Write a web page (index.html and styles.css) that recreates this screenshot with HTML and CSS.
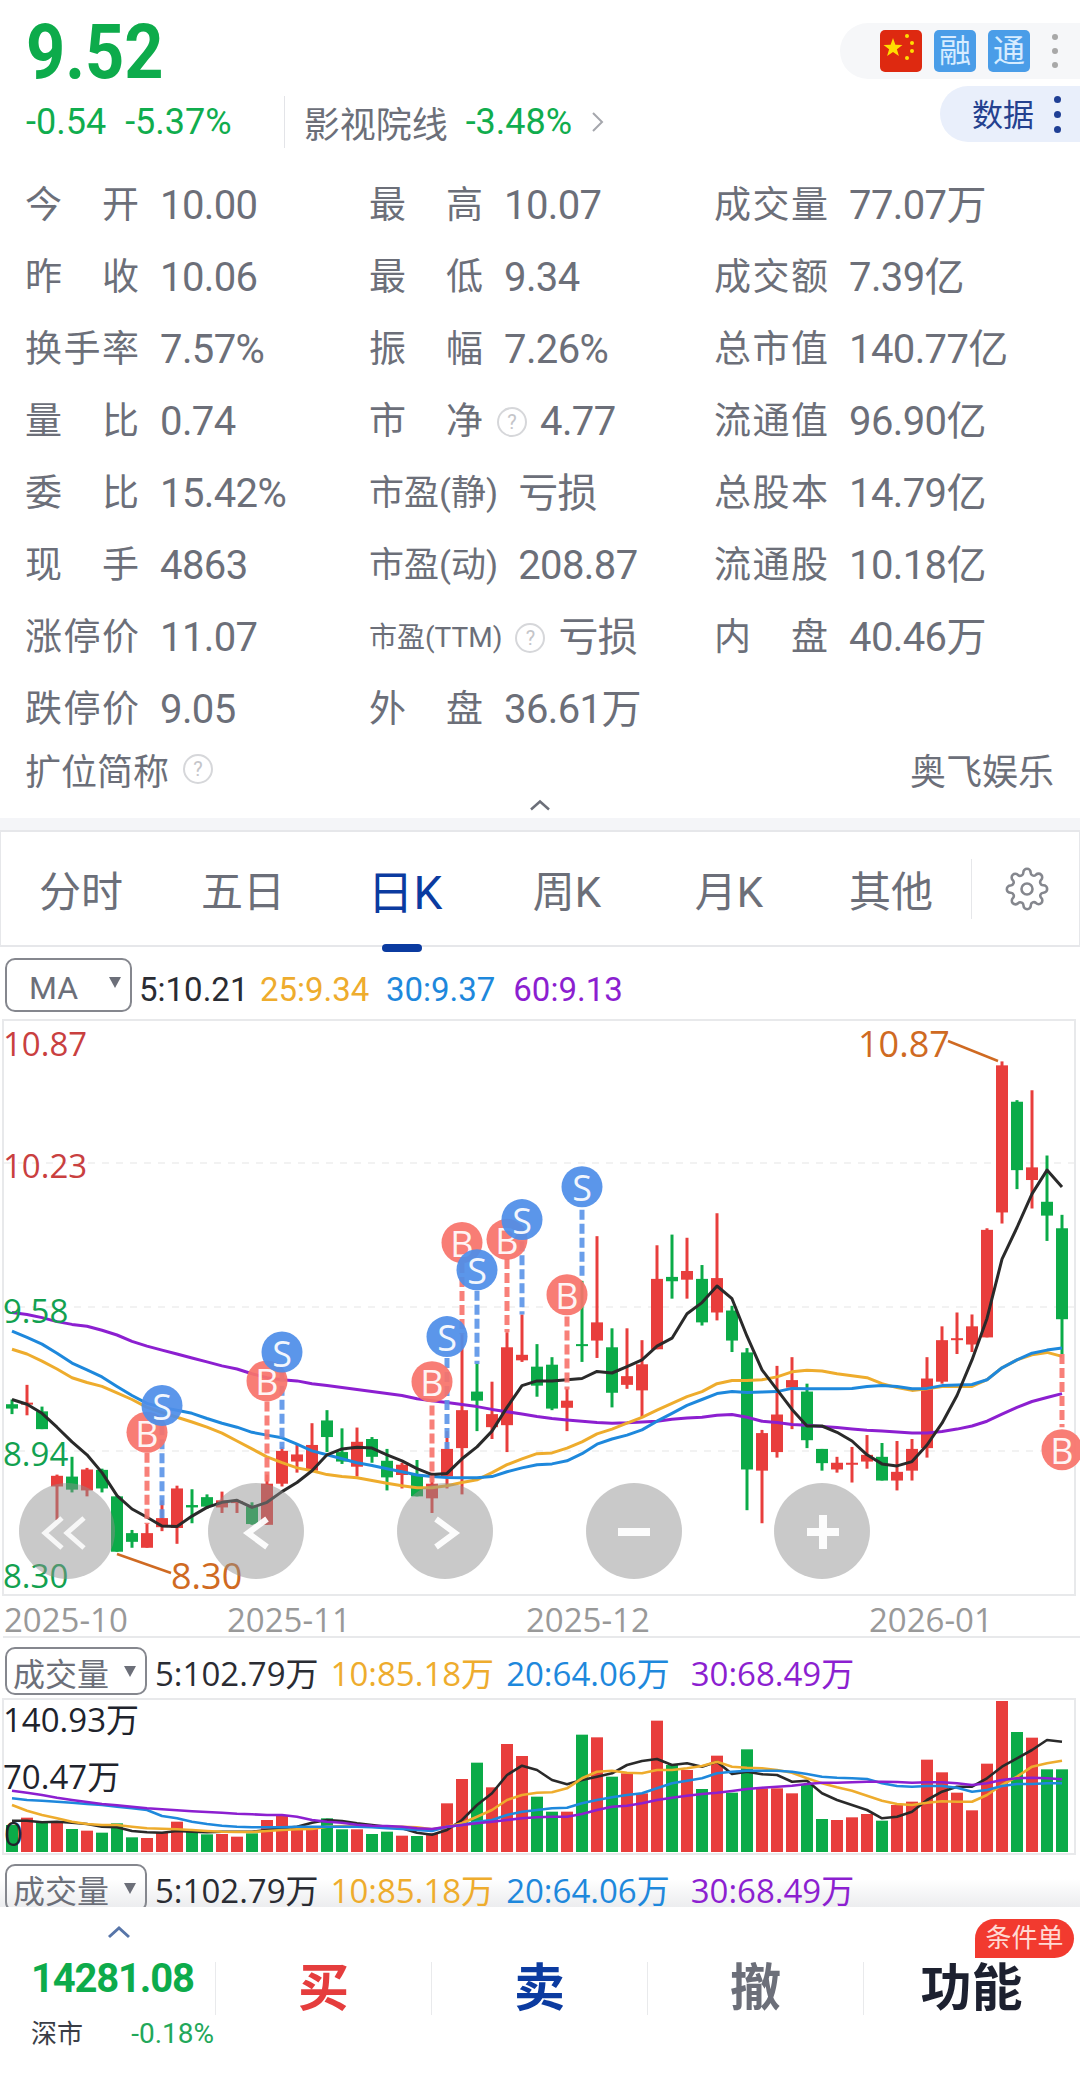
FILE: index.html
```html
<!DOCTYPE html>
<html lang="zh-CN">
<head>
    <meta charset="UTF-8" />
    <title>9.52 行情</title>
    <meta name="viewport" content="width=device-width, initial-scale=1" />
    <link rel="stylesheet" href="styles.css">
</head>
<body>
    <header class="quote-head">
        <div class="head-left">
            <div class="last-price">9.52</div>
            <div class="change-row">
                <span class="change">-0.54</span>
                <span class="change change-last">-5.37%</span>
                <span class="head-divider"></span>
                <span class="sector">影视院线</span>
                <span class="change">-3.48%</span>
                <svg class="sector-arrow" viewBox="0 0 14 24"><path d="M2 3l9 9-9 9" /></svg>
            </div>
        </div>
        <div class="head-right">
            <div class="badge-pill">
                <svg class="flag" viewBox="0 0 42 42">
                    <rect width="42" height="42" rx="5" fill="#de2910" />
                    <polygon fill="#ffde00" points="13,8 15.4,14.7 22.5,14.9 16.9,19.2 18.9,26 13,22 7.1,26 9.1,19.2 3.5,14.9 10.6,14.7" />
                    <circle cx="27" cy="6" r="2" fill="#ffde00" />
                    <circle cx="32" cy="13" r="2" fill="#ffde00" />
                    <circle cx="32" cy="21" r="2" fill="#ffde00" />
                    <circle cx="27" cy="28" r="2" fill="#ffde00" />
                </svg>
                <span class="badge">融</span>
                <span class="badge">通</span>
                <span class="dots dots-gray"><i></i><i></i><i></i></span>
            </div>
            <div class="data-pill"><span class="data-text">数据</span><span class="dots dots-blue"><i></i><i></i><i></i></span></div>
        </div>
    </header>

    <section class="stats">
        <div class="stat"><span class="lbl">今开</span><span class="val">10.00</span></div>
        <div class="stat"><span class="lbl">最高</span><span class="val">10.07</span></div>
        <div class="stat"><span class="lbl">成交量</span><span class="val">77.07万</span></div>
        <div class="stat"><span class="lbl">昨收</span><span class="val">10.06</span></div>
        <div class="stat"><span class="lbl">最低</span><span class="val">9.34</span></div>
        <div class="stat"><span class="lbl">成交额</span><span class="val">7.39亿</span></div>
        <div class="stat"><span class="lbl">换手率</span><span class="val">7.57%</span></div>
        <div class="stat"><span class="lbl">振幅</span><span class="val">7.26%</span></div>
        <div class="stat"><span class="lbl">总市值</span><span class="val">140.77亿</span></div>
        <div class="stat"><span class="lbl">量比</span><span class="val">0.74</span></div>
        <div class="stat"><span class="lbl">市净</span><span class="help help-tight">?</span><span class="val val-tight">4.77</span></div>
        <div class="stat"><span class="lbl">流通值</span><span class="val">96.90亿</span></div>
        <div class="stat"><span class="lbl">委比</span><span class="val">15.42%</span></div>
        <div class="stat"><span class="lbl lbl-pe">市盈(静)</span><span class="val">亏损</span></div>
        <div class="stat"><span class="lbl">总股本</span><span class="val">14.79亿</span></div>
        <div class="stat"><span class="lbl">现手</span><span class="val">4863</span></div>
        <div class="stat"><span class="lbl lbl-pe">市盈(动)</span><span class="val">208.87</span></div>
        <div class="stat"><span class="lbl">流通股</span><span class="val">10.18亿</span></div>
        <div class="stat"><span class="lbl">涨停价</span><span class="val">11.07</span></div>
        <div class="stat"><span class="lbl lbl-ttm">市盈(TTM)</span><span class="help">?</span><span class="val val-tight">亏损</span></div>
        <div class="stat"><span class="lbl">内盘</span><span class="val">40.46万</span></div>
        <div class="stat"><span class="lbl">跌停价</span><span class="val">9.05</span></div>
        <div class="stat"><span class="lbl">外盘</span><span class="val">36.61万</span></div>
    </section>

    <div class="alias-row">
        <span class="alias-name">扩位简称<span class="help">?</span></span>
        <span>奥飞娱乐</span>
    </div>
    <div class="collapse-row">
        <svg viewBox="0 0 22 12"><path d="M2 10.5l9-8 9 8" /></svg>
    </div>
    <div class="band"></div>

    <nav class="tabs">
        <span class="tab">分时</span>
        <span class="tab">五日</span>
        <span class="tab tab-active">日K</span>
        <span class="tab">周K</span>
        <span class="tab">月K</span>
        <span class="tab">其他</span>
        <span class="tab-gear">
            <svg viewBox="0 0 24 24">
                <circle cx="12" cy="12" r="3" />
                <path d="M19.4 15a1.65 1.65 0 0 0 .33 1.82l.06.06a2 2 0 0 1 0 2.83 2 2 0 0 1-2.83 0l-.06-.06a1.65 1.65 0 0 0-1.82-.33 1.65 1.65 0 0 0-1 1.51V21a2 2 0 0 1-2 2 2 2 0 0 1-2-2v-.09A1.65 1.65 0 0 0 9 19.4a1.65 1.65 0 0 0-1.82.33l-.06.06a2 2 0 0 1-2.83 0 2 2 0 0 1 0-2.83l.06-.06a1.65 1.65 0 0 0 .33-1.82 1.65 1.65 0 0 0-1.51-1H3a2 2 0 0 1-2-2 2 2 0 0 1 2-2h.09A1.65 1.65 0 0 0 4.6 9a1.65 1.65 0 0 0-.33-1.82l-.06-.06a2 2 0 0 1 0-2.83 2 2 0 0 1 2.83 0l.06.06a1.65 1.65 0 0 0 1.82.33H9a1.65 1.65 0 0 0 1-1.51V3a2 2 0 0 1 2-2 2 2 0 0 1 2 2v.09a1.65 1.65 0 0 0 1 1.51 1.65 1.65 0 0 0 1.82-.33l.06-.06a2 2 0 0 1 2.83 0 2 2 0 0 1 0 2.83l-.06.06a1.65 1.65 0 0 0-.33 1.82V9a1.65 1.65 0 0 0 1.51 1H21a2 2 0 0 1 2 2 2 2 0 0 1-2 2h-.09a1.65 1.65 0 0 0-1.51 1z" />
            </svg>
        </span>
    </nav>

    <div class="ind-row ind-ma">
        <span class="ind-select">MA</span>
        <span class="c-black">5:10.21</span>
        <span class="c-orange">25:9.34</span>
        <span class="c-blue">30:9.37</span>
        <span class="c-purple">60:9.13</span>
    </div>
    <svg id="kline" class="chart" viewBox="0 1020 1080 617" width="1080" height="617"></svg>

    <div class="ind-row ind-vol">
        <span class="ind-select">成交量</span>
        <span class="c-black">5:102.79万</span>
        <span class="c-orange">10:85.18万</span>
        <span class="c-blue">20:64.06万</span>
        <span class="c-purple">30:68.49万</span>
    </div>
    <svg id="volume" class="chart" viewBox="0 1698 1080 158" width="1080" height="158"></svg>

    <div class="ind-row ind-vol ind-clipped">
        <span class="ind-select">成交量</span>
        <span class="c-black">5:102.79万</span>
        <span class="c-orange">10:85.18万</span>
        <span class="c-blue">20:64.06万</span>
        <span class="c-purple">30:68.49万</span>
    </div>

    <footer class="trade-bar">
        <div class="index-box">
            <svg class="index-arrow" viewBox="0 0 24 14"><path d="M2 12L12 3l10 9" /></svg>
            <div class="index-value">14281.08</div>
            <div class="index-meta"><span>深市</span><span class="index-change">-0.18%</span></div>
        </div>
        <div class="trade-btn btn-buy">买</div>
        <div class="trade-btn btn-sell">卖</div>
        <div class="trade-btn btn-cancel">撤</div>
        <div class="trade-btn btn-func">功能<span class="tag-order">条件单</span></div>
    </footer>

    <script src="chart.js"></script>
</body>
</html>
```

FILE: styles.css
```css
* {
    box-sizing: border-box;
}
html, body {
    margin: 0;
    padding: 0;
}
body {
    width: 1080px;
    height: 2080px;
    overflow: hidden;
    background: #fff;
    font-family: Roboto, "Noto Sans CJK SC", sans-serif;
    color: #6c6f79;
}

/* top quote */
.quote-head {
    height: 170px;
    display: flex;
    justify-content: space-between;
}
.head-left {
    padding: 13px 0 0 26px;
}
.last-price {
    font-size: 76px;
    line-height: 78px;
    font-weight: 700;
    color: #0dab4b;
    transform: scaleX(0.9);
    transform-origin: left;
}
.change-row {
    display: flex;
    align-items: center;
    height: 54px;
    margin-top: 4px;
    font-size: 36px;
}
.change {
    color: #10ad4e;
    margin-right: 19px;
}
.change-last {
    margin-right: 0;
}
.head-divider {
    width: 1px;
    height: 52px;
    background: #e3e4e8;
    margin: 0 19px 0 52px;
}
.sector {
    font-size: 36px;
    margin-right: 18px;
}
.sector-arrow {
    width: 14px;
    height: 24px;
    fill: none;
    stroke: #a5a7ad;
    stroke-width: 2;
}
.head-right {
    width: 240px;
    padding-top: 23px;
    display: flex;
    flex-direction: column;
    align-items: flex-end;
    gap: 7px;
}
.badge-pill {
    width: 240px;
    height: 56px;
    background: #f6f7f9;
    border-radius: 28px 0 0 28px;
    display: flex;
    align-items: center;
    padding-left: 40px;
    gap: 12px;
}
.flag {
    width: 42px;
    height: 42px;
}
.badge {
    width: 42px;
    height: 42px;
    border-radius: 5px;
    background: #4a9de8;
    color: #d7ecff;
    font-size: 32px;
    line-height: 42px;
    text-align: center;
}
.dots {
    display: flex;
    flex-direction: column;
    justify-content: center;
    gap: 8px;
}
.dots i {
    display: block;
    border-radius: 50%;
}
.dots-gray {
    margin-left: 10px;
}
.dots-gray i {
    width: 6px;
    height: 6px;
    background: #a8a8a8;
}
.data-pill {
    width: 140px;
    height: 56px;
    background: #e9effb;
    border-radius: 28px 0 0 28px;
    display: flex;
    align-items: center;
    padding-left: 32px;
    font-size: 31px;
    color: #24418f;
}
.data-text {
    margin-bottom: 3px;
}
.dots-blue {
    margin-left: 20px;
}
.dots-blue i {
    width: 7px;
    height: 7px;
    background: #1f3f95;
}

/* stats grid */
.stats {
    display: grid;
    grid-template-columns: 344px 345px 391px;
    grid-auto-rows: 72px;
    padding-left: 25px;
    height: 576px;
}
.stat {
    display: flex;
    align-items: center;
    font-size: 37px;
    line-height: 46px;
}
.lbl {
    width: 114px;
    text-align: justify;
    text-align-last: justify;
    margin-right: 21px;
    white-space: nowrap;
}
.lbl-pe {
    width: auto;
    font-size: 35px;
    text-align-last: left;
    margin-right: 20px;
}
.lbl-ttm {
    width: auto;
    font-size: 28px;
    text-align-last: left;
    margin-right: 13px;
}
.val {
    font-size: 40px;
    letter-spacing: -0.6px;
    white-space: nowrap;
}
.val-tight {
    margin-left: 13px;
}
.help {
    display: inline-block;
    width: 30px;
    height: 30px;
    border: 2px solid #d6d7da;
    border-radius: 50%;
    color: #c4c5c9;
    font-size: 20px;
    line-height: 26px;
    text-align: center;
    flex-shrink: 0;
}
.help-tight {
    margin-left: -7px;
}
.alias-row {
    height: 46px;
    display: flex;
    justify-content: space-between;
    align-items: center;
    padding: 0 26px 0 25px;
    font-size: 36px;
}
.alias-name {
    display: flex;
    align-items: center;
    gap: 14px;
}
.collapse-row {
    height: 26px;
    display: flex;
    justify-content: center;
    align-items: center;
}
.collapse-row svg {
    width: 22px;
    height: 12px;
    fill: none;
    stroke: #6c6f79;
    stroke-width: 2.5;
}
.band {
    height: 12px;
    background: #f4f5f8;
}

/* period tabs */
.tabs {
    position: relative;
    height: 117px;
    display: flex;
    align-items: center;
    border: 1px solid #e6e7ea;
    border-width: 2px 1px;
}
.tab {
    width: 162px;
    text-align: center;
    font-size: 42px;
    position: relative;
    left: -1px;
}
.tab-active {
    color: #0b3ba0;
    font-size: 46px;
}
.tab-active::after {
    content: "";
    position: absolute;
    left: 58px;
    bottom: -30px;
    width: 40px;
    height: 8px;
    border-radius: 4px;
    background: #0b3ba0;
}
.tab-gear {
    width: 107px;
    height: 60px;
    margin-left: -2px;
    padding-left: 3px;
    border-left: 1px solid #e6e7ea;
    display: flex;
    justify-content: center;
    align-items: center;
}
.tab-gear svg {
    width: 44px;
    height: 44px;
    fill: none;
    stroke: #85878e;
    stroke-width: 1.4;
}

/* indicator legend */
.ind-row {
    display: flex;
    padding: 10px 0 0 5px;
    white-space: nowrap;
    font-family: "Open Sans", "Noto Sans CJK SC", sans-serif;
}
.ind-ma {
    height: 73px;
    gap: 11.5px;
    padding-top: 11px;
    font-family: Roboto, "Noto Sans CJK SC", sans-serif;
    font-size: 33px;
    line-height: 64px;
}
.ind-ma .c-blue {
    margin-left: 5px;
}
.ind-ma .c-purple {
    margin-left: 6.5px;
}
.ind-vol {
    height: 61px;
    gap: 12px;
    font-size: 33px;
    line-height: 54px;
}
.ind-vol .c-purple {
    margin-left: 9px;
}
.ind-clipped {
    height: 51px;
    padding-top: 8px;
    overflow: hidden;
    background: linear-gradient(#fff 45%, #ecedef);
}
.ind-select {
    position: relative;
    flex-shrink: 0;
    border: 2px solid #85878e;
    border-radius: 10px;
    color: #6c6f79;
    padding-left: 22px;
    margin-right: -7px;
}
.ind-ma .ind-select {
    width: 127px;
    height: 54px;
    margin-right: -4.5px;
    font-size: 32px;
    line-height: 56px;
}
.ind-vol .ind-select {
    width: 142px;
    height: 48px;
    margin-right: -4px;
    padding-left: 6px;
    font-family: "Noto Sans CJK SC", sans-serif;
    font-size: 32px;
    line-height: 46px;
}
.ind-select::after {
    content: "";
    position: absolute;
    right: 9px;
    top: 17px;
    border: 6px solid transparent;
    border-top: 11px solid #6c6f79;
    border-bottom: 0;
}
.c-black { color: #2a2c33; }
.c-orange { color: #eeac2d; }
.c-blue { color: #1e88dc; }
.c-purple { color: #8c1fd0; }

.chart {
    display: block;
    overflow: visible;
}
.chart text {
    font-family: "Open Sans", "Noto Sans CJK SC", sans-serif;
    font-size: 33px;
}
.chart text.callout {
    font-size: 36px;
}
.chart text.mark {
    font-size: 36px;
}

/* bottom bar */
.trade-bar {
    position: relative;
    height: 173px;
    background: #fff;
    display: grid;
    grid-template-columns: 215px repeat(4, 216px);
}
.index-box {
    position: relative;
    padding: 51px 0 0 31px;
}
.index-arrow {
    position: absolute;
    left: 107px;
    top: 18px;
    width: 24px;
    height: 14px;
    fill: none;
    stroke: #5775a8;
    stroke-width: 3;
}
.index-value {
    font-size: 40px;
    line-height: 42px;
    font-weight: 700;
    letter-spacing: -1.2px;
    color: #0dab4b;
    white-space: nowrap;
}
.index-meta {
    display: flex;
    justify-content: space-between;
    align-items: center;
    margin-top: 16px;
    font-size: 26px;
    line-height: 36px;
    color: #3a3d46;
    width: 183px;
}
.index-change {
    color: #22a85a;
    font-size: 28px;
}
.trade-btn {
    position: relative;
    margin: 55px 0 65px;
    border-left: 1px solid #e9eaec;
    display: flex;
    justify-content: center;
    align-items: center;
    font-size: 51px;
    font-weight: 700;
    line-height: 1;
}
.btn-buy { color: #e53d3d; }
.btn-sell { color: #0b3ba0; }
.btn-cancel { color: #6c6f79; }
.btn-func { color: #1d2130; }
.tag-order {
    position: absolute;
    right: 5px;
    top: -43px;
    width: 99px;
    height: 39px;
    background: #f23a2f;
    border-radius: 20px 20px 20px 0;
    color: #ffd9d3;
    font-size: 26px;
    font-weight: 400;
    line-height: 39px;
    text-align: center;
}
```

FILE: chart.js
```js
// candles: [wick top, body top, body bottom, wick bottom, colour]
// y values are price-chart units, converted with ky() below
const candles = [
    [985,997,1008,1022,'g'],[948,993,997,1025,'r'],[1003,1015,1060,1060,'g'],[1175,1178,1205,1290,'r'],
    [1130,1180,1213,1220,'g'],[1158,1162,1215,1230,'r'],[1160,1163,1210,1220,'g'],[1230,1230,1370,1370,'g'],
    [1315,1323,1345,1360,'g'],[1300,1323,1360,1360,'r'],[1240,1285,1308,1318,'r'],[1203,1210,1310,1350,'r'],
    [1212,1252,1258,1298,'g'],[1225,1232,1256,1262,'g'],[1218,1240,1258,1272,'r'],[1238,1242,1246,1272,'r'],
    [1245,1255,1300,1302,'g'],[1175,1198,1302,1302,'r'],[1105,1115,1198,1205,'r'],[1100,1124,1142,1170,'r'],
    [1045,1100,1165,1165,'r'],[1012,1038,1080,1118,'g'],[1058,1118,1142,1148,'g'],[1056,1092,1155,1180,'r'],
    [1080,1085,1130,1145,'g'],[1110,1140,1182,1215,'g'],[1145,1150,1176,1210,'r'],[1138,1175,1230,1230,'g'],
    [1170,1198,1235,1272,'r'],[1065,1110,1180,1210,'r'],[820,1012,1108,1225,'r'],[895,965,988,1065,'g'],
    [940,1022,1055,1085,'r'],[815,853,1050,1118,'r'],[770,872,886,890,'r'],[845,902,950,978,'g'],
    [878,897,1008,1012,'g'],[958,988,1006,1065,'r'],[685,845,850,890,'g'],[572,790,836,880,'r'],
    [805,853,968,1005,'g'],[805,926,948,958,'r'],[835,896,962,1030,'r'],[595,680,858,858,'r'],
    [568,675,686,730,'g'],[576,660,682,730,'r'],[645,680,790,798,'g'],[514,678,765,785,'r'],
    [748,760,836,865,'g'],[855,866,1162,1265,'g'],[1062,1070,1165,1298,'r'],[900,1023,1118,1132,'r'],
    [878,936,955,1060,'r'],[945,965,1088,1108,'g'],[1110,1110,1146,1165,'g'],[1130,1145,1162,1170,'r'],
    [1105,1145,1150,1195,'r'],[1075,1125,1142,1160,'r'],[1095,1130,1190,1190,'g'],[1090,1168,1190,1215,'r'],
    [1085,1110,1165,1190,'r'],[878,932,1108,1132,'r'],[800,835,940,945,'r'],[765,830,835,870,'r'],
    [770,800,846,865,'r'],[552,556,828,828,'r'],[130,140,512,540,'r'],[228,232,405,453,'g'],
    [203,398,430,502,'r'],[368,485,520,584,'g'],[518,552,782,870,'g']
];

const priceLines = [
    ['#8c1fd0', [765,770,778,788,795,800,810,822,838,850,860,870,880,890,900,908,920,930,935,938,945,950,955,960,965,970,975,983,988,993,998,1003,1010,1016,1022,1028,1033,1037,1040,1043,1045,1044,1042,1040,1035,1032,1030,1025,1023,1030,1040,1043,1048,1050,1053,1056,1060,1063,1065,1067,1070,1070,1066,1060,1052,1040,1022,1005,990,980,970]],
    ['#eeac2d', [858,870,888,908,930,942,952,968,985,1005,1018,1030,1042,1055,1070,1090,1110,1130,1145,1158,1165,1175,1180,1183,1190,1197,1203,1208,1208,1203,1195,1188,1170,1150,1135,1122,1120,1108,1092,1072,1060,1045,1030,1012,995,978,965,945,937,937,935,928,915,911,913,920,925,930,945,955,962,958,952,952,952,935,905,885,872,866,876]],
    ['#1e88dc', [812,828,845,868,893,910,928,952,975,995,1005,1012,1020,1033,1045,1055,1068,1075,1082,1098,1115,1125,1135,1145,1152,1160,1168,1176,1180,1182,1183,1183,1180,1168,1158,1150,1148,1140,1122,1098,1085,1075,1062,1040,1020,1000,985,970,965,967,966,965,957,958,958,958,957,952,950,952,958,957,950,948,947,935,905,885,868,860,855]],
    ['#2a2a2a', [985,997,1020,1055,1092,1125,1170,1228,1262,1283,1305,1306,1280,1258,1245,1240,1258,1245,1218,1195,1165,1125,1110,1106,1108,1125,1140,1160,1175,1172,1135,1105,1065,1005,950,938,938,935,932,914,918,902,885,850,830,768,740,698,730,825,910,960,1010,1052,1052,1068,1090,1125,1148,1153,1142,1100,1045,975,885,780,630,550,465,405,448]]
];

// [x, top of dash, bottom of dash, circle y, letter]
const trades = [
    [147,1120,1300,1068,'B'],[162,1050,1285,1000,'S'],[267,990,1200,938,'B'],[282,915,1110,865,'S'],
    [432,1000,1195,940,'B'],[447,880,1110,826,'S'],[462,640,820,588,'B'],[477,710,895,657,'S'],
    [507,630,815,580,'B'],[522,585,770,530,'S'],[582,505,680,447,'S'],[567,775,960,720,'B'],
    [1062,870,1055,1112,'B']
];

const volumes = [
    [585,'g'],[563,'r'],[578,'g'],[575,'r'],[597,'g'],[602,'r'],[608,'g'],[580,'g'],[622,'g'],[624,'r'],[608,'r'],[575,'r'],
    [605,'g'],[613,'g'],[612,'r'],[620,'r'],[610,'g'],[570,'r'],[555,'r'],[590,'r'],[590,'r'],[565,'g'],[598,'g'],[598,'r'],
    [612,'g'],[605,'g'],[617,'r'],[618,'g'],[610,'r'],[520,'r'],[447,'r'],[398,'g'],[472,'r'],[342,'r'],[378,'r'],[500,'g'],
    [545,'g'],[545,'r'],[314,'g'],[322,'r'],[440,'g'],[430,'r'],[490,'r'],[272,'r'],[405,'g'],[420,'r'],[477,'g'],[377,'r'],
    [488,'g'],[358,'g'],[475,'r'],[475,'r'],[490,'r'],[465,'g'],[567,'g'],[570,'r'],[562,'r'],[552,'r'],[572,'g'],[525,'r'],
    [515,'r'],[389,'r'],[427,'r'],[488,'r'],[541,'r'],[401,'r'],[213,'r'],[306,'g'],[323,'r'],[418,'g'],[418,'g']
];

const volumeLines = [
    ['#2a2a2a', [572,572,577,575,578,582,590,592,603,607,608,603,605,607,605,605,605,600,595,590,578,570,573,580,585,590,595,608,614,600,570,525,490,435,407,420,450,463,450,440,430,405,393,387,405,400,410,395,432,425,433,435,455,452,490,510,525,540,565,560,545,510,485,470,470,445,410,385,360,330,335]],
    ['#eeac2d', [525,542,555,565,575,582,585,585,590,595,596,598,600,603,605,606,606,603,600,598,597,590,588,588,590,590,590,592,598,590,580,560,540,510,495,488,487,475,445,425,422,428,430,420,420,415,408,395,410,413,415,420,428,445,460,472,482,497,512,522,525,518,514,515,515,495,465,440,410,400,392]],
    ['#1e88dc', [505,510,512,515,518,522,525,530,535,540,558,565,575,582,587,590,592,592,592,590,590,590,590,590,592,595,597,600,603,590,585,575,570,555,545,540,535,533,520,510,502,495,490,475,460,452,445,430,425,422,422,422,425,432,440,443,445,447,460,468,470,468,468,473,485,480,468,462,462,460,460]],
    ['#8c1fd0', [482,488,495,503,510,516,522,526,530,535,538,541,544,546,548,551,553,555,555,560,570,575,578,584,587,588,590,595,597,590,585,580,575,570,565,562,560,560,552,540,530,527,520,510,503,497,492,488,483,477,473,470,467,462,458,458,457,455,455,456,458,457,457,460,465,460,450,445,443,445,448]]
];

const RED = '#e83e3c';
const GREEN = '#0bab48';
const ky = v => 1010 + v / 2.529;
const vy = v => 1630 + v / 3;
const cx = i => 12 + 15 * i;

function rect(x, y, w, h, fill) {
    return `<rect x="${x}" y="${y}" width="${w}" height="${h}" fill="${fill}"/>`;
}
function line(x1, y1, x2, y2, color, width, extra) {
    return `<line x1="${x1}" y1="${y1}" x2="${x2}" y2="${y2}" stroke="${color}" stroke-width="${width}" ${extra || ''}/>`;
}
function label(x, y, str, color, extra) {
    return `<text x="${x}" y="${y}" fill="${color}" dominant-baseline="central" ${extra || ''}>${str}</text>`;
}
function polyline(values, toY, color, width) {
    const pts = values.map((v, i) => `${cx(i)},${toY(v).toFixed(1)}`).join(' ');
    return `<polyline points="${pts}" fill="none" stroke="${color}" stroke-width="${width}" stroke-linejoin="round"/>`;
}

function drawKline() {
    let html = `<rect x="3" y="1020" width="1072" height="575" fill="none" stroke="#e8e9eb" stroke-width="2"/>`;
    html += line(3, 1637, 1080, 1637, '#e8e9eb', 2);
    [1163, 1307, 1451].forEach(y => {
        html += line(4, y, 1074, y, '#eeeeee', 1.5, 'stroke-dasharray="7 7"');
    });

    candles.forEach((c, i) => {
        const color = c[4] === 'r' ? RED : GREEN;
        const x = cx(i);
        html += line(x, ky(c[0]), x, ky(c[3]), color, 3);
        html += rect(x - 6, ky(c[1]), 12, Math.max(ky(c[2]) - ky(c[1]), 2), color);
    });

    priceLines.forEach(l => {
        html += polyline(l[1], ky, l[0], 3);
    });

    // high and low callouts
    html += line(948, 1041, 998, 1061, '#cf6a22', 2.5);
    html += line(117, 1554, 171, 1573, '#cf6a22', 2.5);
    html += label(858, 1043, '10.87', '#cf6a22', 'class="callout"');
    html += label(171, 1575, '8.30', '#cf6a22', 'class="callout"');

    html += label(3, 1043, '10.87', '#c9403f');
    html += label(3, 1165, '10.23', '#c9403f');
    html += label(3, 1310, '9.58', '#12a150');
    html += label(3, 1453, '8.94', '#12a150');
    html += label(3, 1575, '8.30', '#12a150');

    trades.forEach(t => {
        const color = t[4] === 'B' ? '#f8736b' : '#5a94e8';
        html += line(t[0], ky(t[1]), t[0], ky(t[2]), color, 5, 'stroke-dasharray="10 4" opacity="0.9"');
    });
    trades.forEach(t => {
        const color = t[4] === 'B' ? '#f8736b' : '#4f8ee8';
        html += `<circle cx="${t[0]}" cy="${ky(t[3])}" r="20.5" fill="${color}" opacity="0.93"/>`;
        html += label(t[0], ky(t[3]) + 1, t[4], '#fff', 'class="mark" text-anchor="middle" opacity="0.92"');
    });

    // navigation buttons sit on top of the candles
    [67, 256, 445, 634, 822].forEach(x => {
        html += `<circle cx="${x}" cy="1531" r="48" fill="#8f8f8f" opacity="0.48"/>`;
    });
    const thin = 'fill="none" stroke="#fff" stroke-width="5" opacity="0.85"';
    const mid = 'fill="none" stroke="#fff" stroke-width="6" opacity="0.95"';
    const thick = 'fill="none" stroke="#fff" stroke-width="8" opacity="0.95"';
    html += `<path d="M62 1518l-17 15 17 15M84 1518l-17 15 17 15" ${thin}/>`;
    html += `<path d="M267 1519l-19 14 19 14" ${mid}/>`;
    html += `<path d="M436 1519l19 14-19 14" ${mid}/>`;
    html += `<path d="M618 1532h32" ${thick}/>`;
    html += `<path d="M807 1532h32M823 1515v34" ${thick}/>`;

    html += label(4, 1619, '2025-10', '#999999');
    html += label(227, 1619, '2025-11', '#999999');
    html += label(526, 1619, '2025-12', '#999999');
    html += label(869, 1619, '2026-01', '#999999');

    document.getElementById('kline').innerHTML = html;
}

function drawVolume() {
    let html = `<rect x="3" y="1699" width="1072" height="155" fill="none" stroke="#e8e9eb" stroke-width="2"/>`;
    const base = vy(666);
    volumes.forEach((v, i) => {
        html += rect(cx(i) - 6, vy(v[0]), 12, base - vy(v[0]), v[1] === 'r' ? RED : GREEN);
    });
    volumeLines.forEach(l => {
        html += polyline(l[1], vy, l[0], 2.6);
    });
    html += label(3, 1719.5, '140.93万', '#20232c');
    html += label(3, 1776.5, '70.47万', '#20232c');
    html += label(4, 1833.5, '0', '#20232c');
    document.getElementById('volume').innerHTML = html;
}

drawKline();
drawVolume();
```
